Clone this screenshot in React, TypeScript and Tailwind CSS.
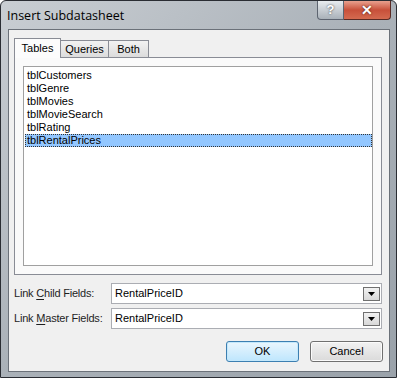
const FONT = "font-['Liberation_Sans',Arial,sans-serif]";

const TABLES = [
  "tblCustomers",
  "tblGenre",
  "tblMovies",
  "tblMovieSearch",
  "tblRating",
  "tblRentalPrices",
];

function DropArrow() {
  return (
    <span className="flex h-[14px] w-[17px] items-center justify-center border border-[#707070] bg-gradient-to-b from-[#f2f2f2] to-[#d8d8d8]">
      <svg width="7" height="4" viewBox="0 0 7 4">
        <path d="M0 0h7L3.5 4z" fill="#000" />
      </svg>
    </span>
  );
}

function LinkField({ label, hot, rest, value }: { label: string; hot: string; rest: string; value: string }) {
  return (
    <div className="flex h-[21px] items-center">
      <span className="w-[97px] text-[11px] tracking-[-0.2px] text-[#1e1e1e]">
        {label}
        <span className="underline underline-offset-2">{hot}</span>
        {rest}
      </span>
      <div className="flex h-[21px] w-[271px] items-center justify-between border border-[#abadb3] bg-white pl-[3px] pr-[1px]">
        <span className="text-[11px] text-black">{value}</span>
        <DropArrow />
      </div>
    </div>
  );
}

export default function App() {
  return (
    <div className={`${FONT} h-[378px] w-[397px] overflow-hidden bg-white`}>
      <div className="flex h-[378px] w-[397px] flex-col rounded-t-[6px] border border-[#2a2d33] bg-gradient-to-br from-[#c9ced3] via-[#aab1b8] to-[#9aa2aa]">
        {/* title bar */}
        <div className="flex h-[28px] items-start justify-between">
          <span className="pl-[6px] pt-[6px] font-['Open_Sans',sans-serif] text-[12.5px] text-black">Insert Subdatasheet</span>
          <div className="mr-[5px] flex h-[19px]">
            <span className="flex w-[27px] items-center justify-center rounded-bl-[4px] border border-t-0 border-[#5d6470] bg-gradient-to-b from-[#e8ecef] to-[#a9b1b9] text-[13px] font-bold text-white [text-shadow:0_0_2px_#333]">
              ?
            </span>
            <span className="flex w-[47px] items-center justify-center rounded-br-[4px] border border-l-0 border-t-0 border-[#5a2a24] bg-gradient-to-b from-[#e8a08e] via-[#c8503a] to-[#d46a50] text-[14px] font-bold text-white [text-shadow:0_0_2px_#3a1008]">
              ✕
            </span>
          </div>
        </div>

        {/* client area */}
        <div className="ml-[7px] flex h-[343px] w-[382px] flex-col border border-[#6b7179] bg-[#f0f0f0] pl-[5px] pt-[8px] text-[11px]">
          {/* tabs */}
          <div className="flex h-[19px] items-end">
            <span className="relative z-10 -mb-px flex h-[20px] w-[47px] items-center justify-center border border-b-0 border-[#898c95] bg-[#fcfcfc] text-black">
              Tables
            </span>
            <span className="flex h-[17px] w-[48px] items-center justify-center border border-b-0 border-l-0 border-[#898c95] bg-gradient-to-b from-[#f2f2f2] to-[#dcdcdc] text-black">
              Queries
            </span>
            <span className="flex h-[17px] w-[40px] items-center justify-center border border-b-0 border-l-0 border-[#898c95] bg-gradient-to-b from-[#f2f2f2] to-[#dcdcdc] text-black">
              Both
            </span>
          </div>
          <div className="h-[218px] w-[368px] border border-[#898c95] bg-[#fafafa] pl-[8px] pt-[8px]">
            <div className="h-[200px] w-[350px] border border-[#a0a0a0] bg-white pl-[1px] pt-[2px]">
              {TABLES.map((t, i) => (
                <div
                  key={t}
                  className={
                    i === TABLES.length - 1
                      ? "h-[13px] w-[347px] border border-dotted border-[#333] bg-[#93c7ff] pl-[1px] leading-[11px] text-black"
                      : "h-[13px] pl-[2px] leading-[13px] text-black"
                  }
                >
                  {t}
                </div>
              ))}
            </div>
          </div>

          {/* link fields */}
          <div className="mt-[8px] flex flex-col gap-[4px]">
            <LinkField label="Link " hot="C" rest="hild Fields:" value="RentalPriceID" />
            <LinkField label="Link " hot="M" rest="aster Fields:" value="RentalPriceID" />
          </div>

          {/* buttons */}
          <div className="mt-[12px] flex gap-[11px] pl-[212px]">
            <button className="h-[21px] w-[73px] rounded-[3px] border border-[#3c7fb1] bg-gradient-to-b from-[#eaf6fd] to-[#bee6fd] text-[11px] text-black shadow-[inset_0_0_0_1px_#c4e8fb]">
              OK
            </button>
            <button className="h-[21px] w-[73px] rounded-[3px] border border-[#707070] bg-gradient-to-b from-[#f2f2f2] to-[#dadada] text-[11px] text-black shadow-[inset_0_0_0_1px_#fbfbfb]">
              Cancel
            </button>
          </div>
        </div>
      </div>
    </div>
  );
}
